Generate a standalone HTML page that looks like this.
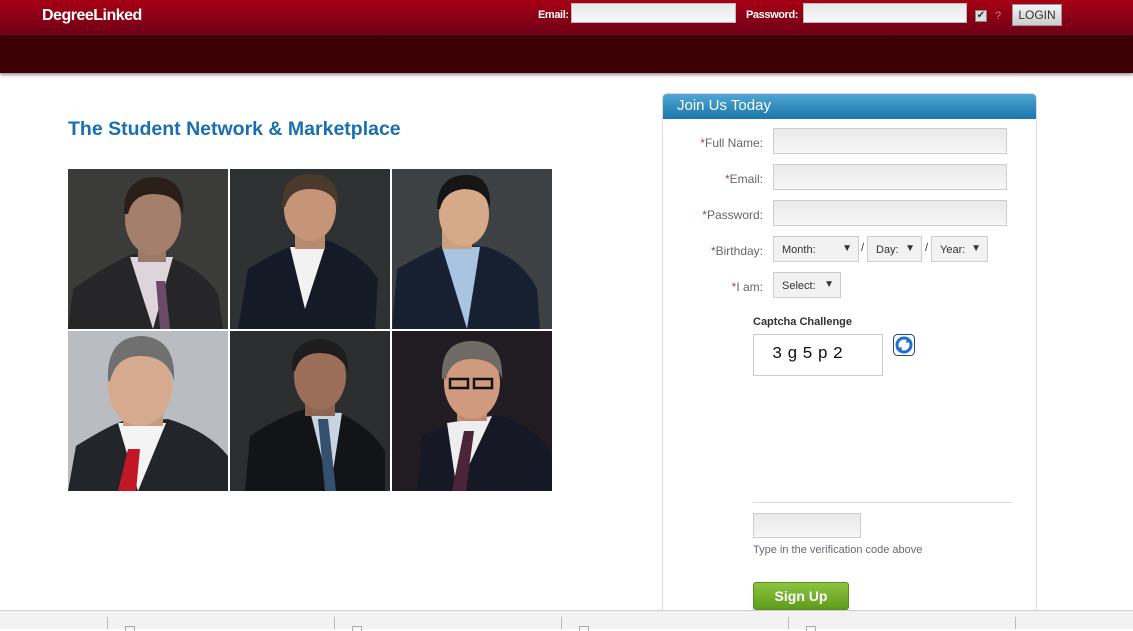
<!DOCTYPE html>
<html><head><meta charset="utf-8">
<style>
*{margin:0;padding:0;box-sizing:border-box}
body{width:1133px;height:629px;overflow:hidden;background:#fff;font-family:"Liberation Sans",sans-serif;position:relative}
.top{position:absolute;left:0;top:0;width:1133px;height:35px;background:linear-gradient(#a70015,#6e0016)}
.band{position:absolute;left:0;top:35px;width:1133px;height:38px;background:#3d0004;box-shadow:0 2px 3px #999}
.logo{position:absolute;left:42px;top:7px;color:#fff;font-weight:bold;font-size:16px;letter-spacing:-0.5px}
.tl{position:absolute;top:9px;color:#fff;font-size:11px;font-weight:bold;letter-spacing:-0.4px}
.ti{position:absolute;top:3px;height:20px;background:linear-gradient(#e8e8e8,#f8f8f8);border:1px solid #bbb}
.chk{position:absolute;left:975px;top:10px;width:12px;height:12px;background:#ddd;border:1px solid #888;font-size:10px;line-height:10px;text-align:center;color:#333}
.q{position:absolute;left:995px;top:10px;color:#c88;font-size:11px}
.login{position:absolute;left:1012px;top:4px;width:50px;height:22px;background:linear-gradient(#f4f4f4,#ccc);border:1px solid #999;font-size:12px;color:#333;text-align:center;line-height:20px}
h1{position:absolute;left:68px;top:118px;color:#1a6fb0;font-size:19.5px;font-weight:bold}
.grid{position:absolute;left:68px;top:169px;width:484px;height:322px}
.grid svg{position:absolute;width:160px;height:160px}
.panel{position:absolute;left:662px;top:93px;width:375px;height:530px;border:1px solid #ddd;border-radius:5px 5px 0 0}
.ph{height:25px;background:linear-gradient(#4fa6d3,#1a77aa);border-radius:4px 4px 0 0;color:#fff;font-size:15px;padding:3px 0 0 14px}
.lab{position:absolute;right:273px;color:#666;font-size:12px;text-align:right;white-space:nowrap}
.lab b{font-weight:normal;color:#a44}
.in{position:absolute;left:110px;width:234px;height:26px;background:linear-gradient(#eaeaea,#f6f6f6);border:1px solid #ccc}
.sel{position:absolute;height:26px;background:#f2f2f2;border:1px solid #ccc;font-size:11px;color:#333;padding:7px 0 0 8px}
.sel i{position:absolute;right:6px;top:6px;font-style:normal;font-size:10px}
.sl{position:absolute;top:148px;font-size:11px;color:#333}
.footer{position:absolute;left:0;top:610px;width:1133px;height:19px;background:#f2f2f2;border-top:1px solid #ccc}
.fd{position:absolute;top:617px;width:1px;height:12px;background:#bbb}
.fi{position:absolute;top:626px;width:10px;height:5px;border:1px solid #aaa;border-bottom:none}
</style></head><body>
<div class="top"></div><div class="band"></div>
<div class="logo">DegreeLinked</div>
<div class="tl" style="left:538px">Email:</div><div class="ti" style="left:571px;width:165px"></div>
<div class="tl" style="left:746px">Password:</div><div class="ti" style="left:803px;width:164px"></div>
<div class="chk">✔</div><div class="q">?</div><div class="login">LOGIN</div>

<h1>The Student Network &amp; Marketplace</h1>
<div class="grid">
<svg style="left:0;top:0" viewBox="0 0 160 160"><rect width="160" height="160" fill="#3b3b3a"/><path d="M0 160 L5 120 Q40 95 65 85 L100 88 Q135 100 150 125 L155 160Z" fill="#262628"/><path d="M62 88 L85 160 L105 88Z" fill="#ddd4dc"/><path d="M88 112 L97 112 L102 160 L92 160Z" fill="#6a4a66"/><rect x="70" y="65" width="28" height="28" fill="#9c7a68"/><ellipse cx="85" cy="50" rx="28" ry="36" fill="#a4806c"/><path d="M56 45 Q55 8 88 8 Q118 10 115 45 Q110 25 85 25 Q65 25 60 45Z" fill="#2a1e18"/></svg>
<svg style="left:162px;top:0" viewBox="0 0 160 160"><rect width="160" height="160" fill="#2e3132"/><path d="M8 160 L18 100 Q50 80 75 72 L100 72 Q135 88 148 110 L145 160Z" fill="#151b26"/><path d="M60 78 L75 140 L95 78Z" fill="#f2f2f2"/><rect x="65" y="50" width="30" height="30" fill="#b88a70"/><ellipse cx="80" cy="40" rx="26" ry="32" fill="#c69478"/><path d="M52 38 Q52 5 80 5 Q110 5 108 38 Q102 20 80 20 Q60 20 55 38Z" fill="#4a3a2c"/></svg>
<svg style="left:324px;top:0" viewBox="0 0 160 160"><rect width="160" height="160" fill="#3d4144"/><path d="M0 160 L5 100 Q40 80 55 75 L95 78 Q130 90 145 120 L148 160Z" fill="#172030"/><path d="M50 78 L75 160 L88 78Z" fill="#a8c4e0"/><rect x="50" y="50" width="30" height="30" fill="#caa080"/><ellipse cx="72" cy="45" rx="25" ry="32" fill="#d6aa88"/><path d="M45 40 Q45 6 75 6 Q100 6 98 40 Q94 20 72 20 Q52 22 48 40Z" fill="#151515"/></svg>
<svg style="left:0;top:162px" viewBox="0 0 160 160"><rect width="160" height="160" fill="#b9bdc1"/><path d="M0 160 L8 115 Q40 95 55 90 L100 88 Q140 100 160 125 L160 160Z" fill="#22252a"/><path d="M50 92 L70 160 L98 92Z" fill="#f4f4f4"/><path d="M60 118 L72 118 L68 160 L50 160Z" fill="#c01826"/><rect x="55" y="65" width="40" height="30" fill="#c89a80"/><ellipse cx="72" cy="55" rx="32" ry="40" fill="#d6aa8e"/><path d="M40 50 Q38 5 75 5 Q108 8 106 50 Q100 25 72 25 Q48 25 42 50Z" fill="#707070"/></svg>
<svg style="left:162px;top:162px" viewBox="0 0 160 160"><rect width="160" height="160" fill="#2c2d2e"/><path d="M15 160 L20 105 Q50 85 75 78 L105 80 Q140 95 155 120 L155 160Z" fill="#121418"/><path d="M80 80 L100 160 L112 82Z" fill="#c8d4e0"/><path d="M88 88 L98 88 L106 160 L95 160Z" fill="#35506e"/><rect x="75" y="55" width="30" height="30" fill="#8c6450"/><ellipse cx="90" cy="45" rx="26" ry="34" fill="#9a6e58"/><path d="M62 40 Q60 10 90 8 Q120 10 118 42 Q112 22 90 22 Q70 22 65 40Z" fill="#1e1c1c"/></svg>
<svg style="left:324px;top:162px" viewBox="0 0 160 160"><rect width="160" height="160" fill="#211c22"/><path d="M25 160 L30 105 Q60 90 85 85 L110 85 Q150 100 160 125 L160 160Z" fill="#161826"/><path d="M55 92 L65 160 L100 85Z" fill="#eee"/><path d="M72 100 L82 100 L74 160 L60 160Z" fill="#4a2438"/><rect x="65" y="60" width="30" height="30" fill="#c08a72"/><ellipse cx="80" cy="52" rx="28" ry="36" fill="#d09a80"/><path d="M50 48 Q48 10 80 10 Q112 10 110 48 Q104 28 80 28 Q58 28 54 48Z" fill="#706a64"/><rect x="58" y="48" width="18" height="9" fill="none" stroke="#111" stroke-width="2.5"/><rect x="82" y="48" width="18" height="9" fill="none" stroke="#111" stroke-width="2.5"/></svg>
</div>

<div class="panel">
<div class="ph">Join Us Today</div>
<div class="lab" style="top:42px"><b>*</b>Full Name:</div><div class="in" style="top:34px"></div>
<div class="lab" style="top:78px"><b>*</b>Email:</div><div class="in" style="top:70px"></div>
<div class="lab" style="top:114px"><b>*</b>Password:</div><div class="in" style="top:106px"></div>
<div class="lab" style="top:150px"><b>*</b>Birthday:</div>
<div class="sel" style="left:110px;top:142px;width:86px">Month:<i>▼</i></div><div class="sl" style="left:198px">/</div>
<div class="sel" style="left:204px;top:142px;width:55px">Day:<i>▼</i></div><div class="sl" style="left:262px">/</div>
<div class="sel" style="left:268px;top:142px;width:57px">Year:<i>▼</i></div>
<div class="lab" style="top:186px"><b>*</b>I am:</div>
<div class="sel" style="left:110px;top:178px;width:68px">Select:<i>▼</i></div>
<div style="position:absolute;left:90px;top:222px;font-size:11px;font-weight:bold;color:#333">Captcha Challenge</div>
<div style="position:absolute;left:90px;top:240px;width:130px;height:42px;border:1px solid #ccc;font-family:'Liberation Mono',monospace;font-size:17px;padding:10px 0 0 18px;letter-spacing:5px;color:#111">3g5p2</div>
<svg style="position:absolute;left:230px;top:240px" width="22" height="22" viewBox="0 0 22 22"><rect x="0.5" y="0.5" width="21" height="21" rx="4" fill="#fff" stroke="#1c4a8a"/><circle cx="11" cy="11" r="7" fill="none" stroke="#1e6fd0" stroke-width="3"/><path d="M14 3 L19 7 L13 9Z M8 19 L3 15 L9 13Z" fill="#1e6fd0"/></svg>
<div style="position:absolute;left:90px;top:408px;width:260px;height:1px;background:#ddd"></div>
<div style="position:absolute;left:90px;top:419px;width:108px;height:25px;background:linear-gradient(#eaeaea,#f6f6f6);border:1px solid #ccc"></div>
<div style="position:absolute;left:90px;top:450px;font-size:11px;color:#667">Type in the verification code above</div>
<div style="position:absolute;left:90px;top:488px;width:96px;height:28px;background:linear-gradient(#8cc440,#5f9c1c);border:1px solid #5a8a20;border-radius:3px;color:#fff;font-weight:bold;font-size:14px;text-align:center;line-height:26px">Sign Up</div>
</div>

<div class="footer"></div>
<div class="fd" style="left:107px"></div><div class="fd" style="left:334px"></div><div class="fd" style="left:561px"></div><div class="fd" style="left:788px"></div><div class="fd" style="left:1015px"></div>
<div class="fi" style="left:125px"></div><div class="fi" style="left:352px"></div><div class="fi" style="left:579px"></div><div class="fi" style="left:806px"></div>
</body></html>
